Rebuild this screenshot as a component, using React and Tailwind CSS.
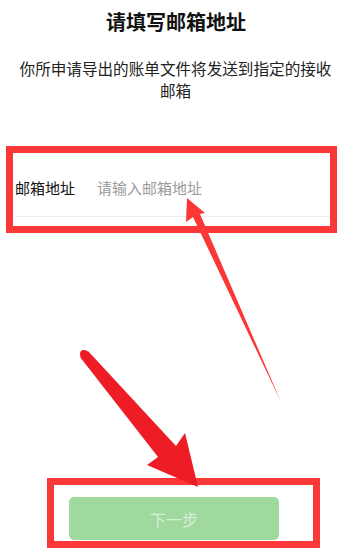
import React from 'react'

const cjk = { fontFamily: '"Noto Sans CJK SC", "Noto Sans", sans-serif' }

export default function App() {
  return (
    <div className="relative h-[548px] w-[357px] overflow-hidden bg-white" style={cjk}>
      <h1 className="pr-[5px] pt-[8px] text-center text-[20px] font-bold leading-[28px] text-[#111]">请填写邮箱地址</h1>
      <p className="mt-[21px] pl-[17px] pr-[23px] text-center text-[15.6px] leading-[22px] text-[#222]">
        你所申请导出的账单文件将发送到指定的接收邮箱
      </p>

      <div className="ml-[15px] mr-[26px] mt-[59px] flex h-[57px] items-center border-b border-[#ececec]">
        <label className="w-[82px] shrink-0 text-[15px] text-[#111]">邮箱地址</label>
        <input
          type="text"
          placeholder="请输入邮箱地址"
          className="w-full bg-transparent text-[15px] outline-none placeholder:text-[#9b9b9b]"
          style={cjk}
        />
      </div>

      <button className="ml-[69px] mt-[280px] flex h-[43px] w-[210px] items-center justify-center rounded-[5px] bg-[#9fd99e] text-[16px] text-white/60">
        下一步
      </button>

      {/* annotation marks */}
      <div className="absolute left-[6px] top-[146px] h-[87px] w-[331px] border-[7px] border-[#fc3737]" />
      <div className="absolute left-[47px] top-[478px] h-[70px] w-[273px] border-[7px] border-[#fc3737]" />
      <svg className="pointer-events-none absolute left-0 top-0" width="357" height="548" viewBox="0 0 357 548">
        <polygon points="187,198 205,213 200,214 281,402 193,217 186,222" fill="#fc3737" />
        <circle cx="84" cy="354" r="4" fill="#ed1c25" />
        <polygon points="80,357 158,457 147,465 198,487 185,433 176,446 88,351" fill="#ed1c25" />
      </svg>
    </div>
  )
}
